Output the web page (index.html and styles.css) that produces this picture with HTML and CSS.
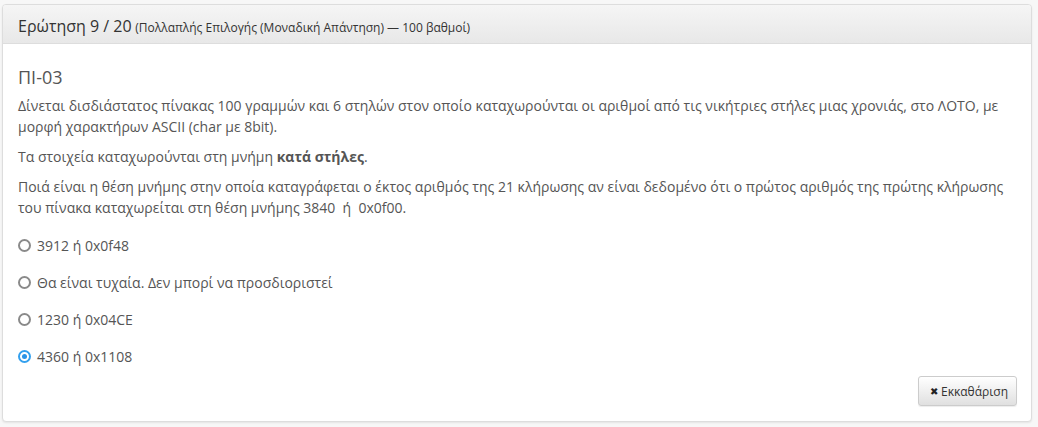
FILE: index.html
```html
<!DOCTYPE html>
<html lang="el">
<head>
<meta charset="utf-8">
<link rel="stylesheet" href="styles.css">
</head>
<body>
<div class="page">
  <div class="panel">
    <div class="panel-heading">
      <span class="q-title">Ερώτηση 9 / 20</span>
      <span class="q-meta">(Πολλαπλής Επιλογής (Μοναδική Απάντηση) — 100 βαθμοί)</span>
    </div>
    <div class="panel-body">
      <h3 class="q-code">ΠΙ-03</h3>
      <p>Δίνεται δισδιάστατος πίνακας 100 γραμμών και 6 στηλών στον οποίο καταχωρούνται οι αριθμοί από τις νικήτριες στήλες μιας χρονιάς, στο ΛΟΤΟ, με μορφή χαρακτήρων ASCII (char με 8bit).</p>
      <p>Τα στοιχεία καταχωρούνται στη μνήμη <strong>κατά στήλες</strong>.</p>
      <p>Ποιά είναι η θέση μνήμης στην οποία καταγράφεται ο έκτος αριθμός της 21 κλήρωσης αν είναι δεδομένο ότι ο πρώτος αριθμός της πρώτης κλήρωσης του πίνακα καταχωρείται στη θέση μνήμης 3840 &nbsp;ή &nbsp;0x0f00.</p>
      <ul class="options">
        <li class="option"><span class="radio"></span><span>3912 ή 0x0f48</span></li>
        <li class="option"><span class="radio"></span><span>Θα είναι τυχαία. Δεν μπορί να προσδιοριστεί</span></li>
        <li class="option"><span class="radio"></span><span>1230 ή 0x04CE</span></li>
        <li class="option"><span class="radio checked"></span><span>4360 ή 0x1108</span></li>
      </ul>
      <div class="actions">
        <button class="btn"><span class="x">✖</span>Εκκαθάριση</button>
      </div>
    </div>
  </div>
</div>
</body>
</html>
```
FILE: styles.css
```css
html, body {
  margin: 0;
  padding: 0;
  background: #f7f7f7;
}
body {
  font-family: "Open Sans", "Noto Sans", sans-serif;
  color: #555;
  font-size: 14px;
}
.page {
  padding: 4px 6px 6px 2px;
}
.panel {
  background: #fff;
  border: 1px solid #ddd;
  border-radius: 4px;
  box-shadow: 0 1px 2px rgba(0,0,0,0.08);
  overflow: hidden;
}
.panel-heading {
  height: 39px;
  box-sizing: border-box;
  padding: 10px 15px 0 15px;
  background: linear-gradient(to bottom, #f5f5f5 0%, #e8e8e8 100%);
  border-bottom: 1px solid #ddd;
  color: #333;
  white-space: nowrap;
}
.q-title {
  font-size: 16px;
}
.q-meta {
  font-size: 12px;
}
.panel-body {
  padding: 20px 15px 15px 15px;
}
.q-code {
  font-size: 18px;
  font-weight: normal;
  color: #555;
  margin: 0 0 5px 0;
  line-height: 26px;
}
p {
  margin: 0 0 9px 0;
  line-height: 21px;
}
.options {
  list-style: none;
  margin: 0;
  padding: 0;
}
.option {
  display: flex;
  align-items: center;
  gap: 6px;
  height: 37px;
  line-height: 21px;
}
.radio {
  width: 13px;
  height: 13px;
  border: 2px solid #8a8a8a;
  border-radius: 50%;
  box-sizing: border-box;
  flex: none;
  margin-left: 0;
  display: flex;
  align-items: center;
  justify-content: center;
}
.radio.checked {
  border-color: #33a0ee;
}
.radio.checked::after {
  content: "";
  width: 5px;
  height: 5px;
  border-radius: 50%;
  background: #2a93e6;
}
.actions {
  display: flex;
  justify-content: flex-end;
  margin-top: 1px;
  margin-right: -1px;
}
.btn {
  font-family: "Open Sans", "Noto Sans", sans-serif;
  font-size: 12px;
  color: #333;
  height: 30px;
  width: 99px;
  padding: 0 0 0 11px;
  border: 1px solid #ccc;
  border-radius: 3px;
  background: linear-gradient(to bottom, #fff 0%, #e0e0e0 100%);
  box-shadow: inset 0 1px 0 rgba(255,255,255,.15), 0 1px 1px rgba(0,0,0,.075);
  display: flex;
  align-items: center;
  gap: 3px;
}
.x {
  font-size: 10px;
  color: #222;
}
```
